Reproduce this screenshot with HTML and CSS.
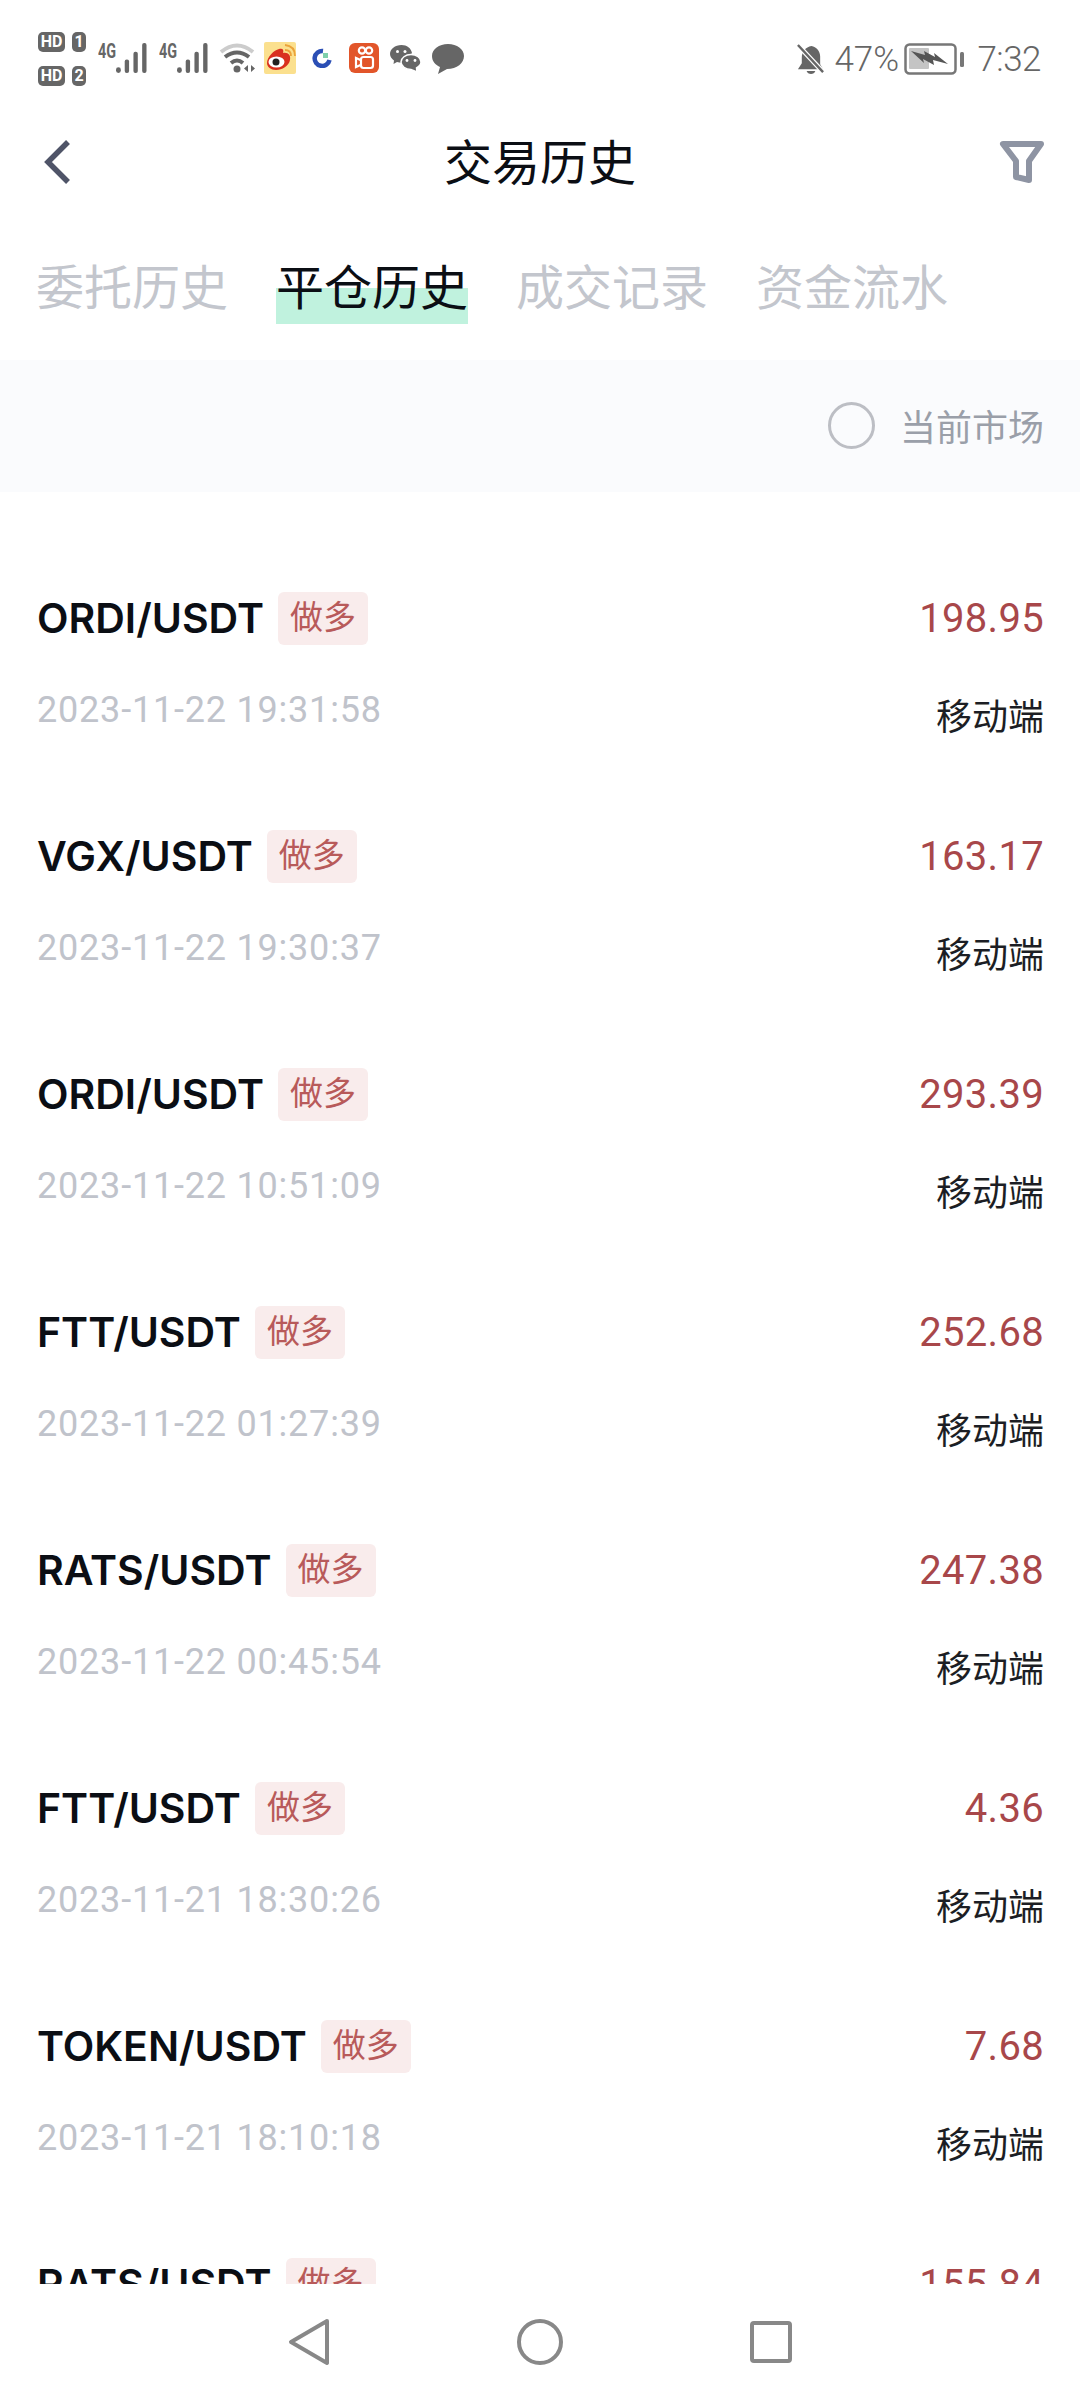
FILE: index.html
```html
<!DOCTYPE html>
<html lang="zh-CN">
<head>
<meta charset="UTF-8">
<meta name="viewport" content="width=device-width, initial-scale=1.0">
<title>交易历史</title>
<link rel="stylesheet" href="styles.css">
</head>
<body>

<div class="screen">

    <!-- Status bar -->
    <div class="status-bar">
        <div class="status-left">
            <div class="sim-grid">
                <span class="hd-badge">HD</span><span class="sim-badge">1</span>
                <span class="hd-badge">HD</span><span class="sim-badge">2</span>
            </div>
            <div class="signal">
                <span class="signal-label">4G</span>
                <svg class="signal-bars" viewBox="0 0 32 32"><g fill="#666"><rect x="0" y="25" width="5" height="6" rx="2.5"/><rect x="9" y="17" width="4.5" height="14" rx="2"/><rect x="18" y="9" width="4.5" height="22" rx="2"/><rect x="27" y="0" width="4.5" height="31" rx="2"/></g></svg>
            </div>
            <div class="signal signal-second">
                <span class="signal-label">4G</span>
                <svg class="signal-bars" viewBox="0 0 32 32"><g fill="#666"><rect x="0" y="25" width="5" height="6" rx="2.5"/><rect x="9" y="17" width="4.5" height="14" rx="2"/><rect x="18" y="9" width="4.5" height="22" rx="2"/><rect x="27" y="0" width="4.5" height="31" rx="2"/></g></svg>
            </div>
            <svg class="icon-wifi" viewBox="0 0 37 30">
                <path d="M2 9 Q18 -4 34 9" fill="none" stroke="#ccc" stroke-width="4"/>
                <path d="M6 14 Q18 5 30 14" fill="none" stroke="#666" stroke-width="4"/>
                <path d="M12 20 Q18 15 24 20" fill="none" stroke="#666" stroke-width="4"/>
                <circle cx="18" cy="26" r="3.5" fill="#666"/>
                <path d="M29 22 v7 l-4 -3.5z M32 22 v7 l4 -3.5z" fill="#666"/>
            </svg>
            <svg class="icon-weibo" viewBox="0 0 32 32">
                <rect width="32" height="32" rx="2" fill="#fbe08e"/>
                <path d="M3 21 C3 15 10 8 15 7 C19 6 20 8 19 11 C24 10 27 13 26 18 C25 24 18 28 12 28 C7 28 3 25 3 21z" fill="#d9301f"/>
                <ellipse cx="12.500" cy="20" rx="8" ry="5.500" fill="#fff"/>
                <circle cx="12" cy="20" r="3.500" fill="#222"/>
                <path d="M21 8 Q27 8 27 14 M21 3 Q31 4 31 14" fill="none" stroke="#eba33a" stroke-width="1.800"/>
            </svg>
            <svg class="icon-circle" viewBox="0 0 20 20">
                <path d="M11 3 A7.500 7.500 0 1 0 17.500 12" fill="none" stroke="#2b4fb5" stroke-width="4.500"/>
                <rect x="11" y="5" width="5" height="5" fill="#7fd0ab"/>
            </svg>
            <svg class="icon-kuaishou" viewBox="0 0 30 30">
                <rect width="30" height="30" rx="6" fill="#e2552a"/>
                <g fill="none" stroke="#fff" stroke-width="2.200">
                    <circle cx="13" cy="7.500" r="3.200"/>
                    <circle cx="20" cy="7.500" r="3.200"/>
                    <rect x="12" y="14" width="12" height="11" rx="2.500"/>
                    <path d="M11.500 17 L7 15 V24 L11.500 22"/>
                </g>
            </svg>
            <svg class="icon-wechat" viewBox="0 0 31 27">
                <path d="M11.500 0 C5 0 0 4 0 9 C0 12 2 14 4 15.500 L3.500 19 L7 17 C10 18 14 17.500 14 17.500 L22 8 C21 3 17 0 11.500 0z" fill="#666"/>
                <path d="M21 9.500 C15.500 9.500 11 13 11 17 C11 21 15.500 24.500 21 24.500 L27 27 L26.500 23 C29 21.500 31 19.500 31 17 C31 13 26.500 9.500 21 9.500z" fill="#666" stroke="#fff" stroke-width="1.500"/>
                <g fill="#fff"><circle cx="7.500" cy="6.500" r="1.500"/><circle cx="15" cy="6.500" r="1.500"/><circle cx="17" cy="15.500" r="1.400"/><circle cx="25" cy="15.500" r="1.400"/></g>
            </svg>
            <svg class="icon-message" viewBox="0 0 32 30">
                <path d="M16 0 C7 0 0 5 0 12 C0 18 4 21 8 23 L6 30 L15 25 C25 25 32 19 32 12 C32 5 25 0 16 0z" fill="#666"/>
            </svg>
        </div>
        <div class="status-right">
            <svg class="icon-bell" viewBox="0 0 30 32">
                <path d="M16 2 C10 3 6 8 6 14 V20 L2 26 H28 L25 21 V13 C25 7 21 3 16 2z" fill="#666"/>
                <path d="M11 28 H20 C19 32 12 32 11 28z" fill="#666"/>
                <path d="M1 0 L29 30" stroke="#fff" stroke-width="5"/>
                <path d="M2 1 L28 29" stroke="#666" stroke-width="2.500"/>
            </svg>
            <span class="battery-text">47%</span>
            <svg class="icon-battery" viewBox="0 0 60 32">
                <rect x="1.500" y="1.500" width="50" height="29" rx="4" fill="#fff" stroke="#777" stroke-width="2.500"/>
                <rect x="5" y="5" width="20" height="21" rx="1" fill="#c4c4c4"/>
                <path d="M7 8 L21 12 L20 8 L31 14 L30 10 L44 21 L29 17 L30 22 L19 16 L20 20z" fill="#555"/>
                <rect x="56" y="9" width="4" height="15" rx="1.500" fill="#777"/>
            </svg>
            <span class="clock">7:32</span>
        </div>
    </div>

    <!-- Title bar -->
    <div class="title-bar">
        <svg class="icon-back" viewBox="0 0 28 46"><path d="M25 3 L5 23 L25 43" fill="none" stroke="#4f5468" stroke-width="5.500"/></svg>
        <h1 class="page-title">交易历史</h1>
        <svg class="icon-filter" viewBox="0 0 46 44"><path d="M4 4 H42 L30 21 V40 L17 37 V21z" fill="none" stroke="#8e94a3" stroke-width="6" stroke-linejoin="round"/></svg>
    </div>

    <!-- Tabs -->
    <div class="tabs">
        <span class="tab">委托历史</span>
        <span class="tab tab-active">平仓历史</span>
        <span class="tab">成交记录</span>
        <span class="tab">资金流水</span>
    </div>

    <!-- Market filter -->
    <div class="market-filter">
        <span class="radio"></span>
        <span class="market-label">当前市场</span>
    </div>

    <!-- Orders -->
    <div class="order-list">
        <div class="order">
            <div class="order-top">
                <span class="pair">ORDI/USDT</span><span class="side-tag">做多</span>
                <span class="amount">198.95</span>
            </div>
            <div class="order-bottom">
                <span class="order-time">2023-11-22 19:31:58</span>
                <span class="order-source">移动端</span>
            </div>
        </div>
        <div class="order">
            <div class="order-top">
                <span class="pair">VGX/USDT</span><span class="side-tag">做多</span>
                <span class="amount">163.17</span>
            </div>
            <div class="order-bottom">
                <span class="order-time">2023-11-22 19:30:37</span>
                <span class="order-source">移动端</span>
            </div>
        </div>
        <div class="order">
            <div class="order-top">
                <span class="pair">ORDI/USDT</span><span class="side-tag">做多</span>
                <span class="amount">293.39</span>
            </div>
            <div class="order-bottom">
                <span class="order-time">2023-11-22 10:51:09</span>
                <span class="order-source">移动端</span>
            </div>
        </div>
        <div class="order">
            <div class="order-top">
                <span class="pair">FTT/USDT</span><span class="side-tag">做多</span>
                <span class="amount">252.68</span>
            </div>
            <div class="order-bottom">
                <span class="order-time">2023-11-22 01:27:39</span>
                <span class="order-source">移动端</span>
            </div>
        </div>
        <div class="order">
            <div class="order-top">
                <span class="pair">RATS/USDT</span><span class="side-tag">做多</span>
                <span class="amount">247.38</span>
            </div>
            <div class="order-bottom">
                <span class="order-time">2023-11-22 00:45:54</span>
                <span class="order-source">移动端</span>
            </div>
        </div>
        <div class="order">
            <div class="order-top">
                <span class="pair">FTT/USDT</span><span class="side-tag">做多</span>
                <span class="amount">4.36</span>
            </div>
            <div class="order-bottom">
                <span class="order-time">2023-11-21 18:30:26</span>
                <span class="order-source">移动端</span>
            </div>
        </div>
        <div class="order">
            <div class="order-top">
                <span class="pair">TOKEN/USDT</span><span class="side-tag">做多</span>
                <span class="amount">7.68</span>
            </div>
            <div class="order-bottom">
                <span class="order-time">2023-11-21 18:10:18</span>
                <span class="order-source">移动端</span>
            </div>
        </div>
        <div class="order">
            <div class="order-top">
                <span class="pair">RATS/USDT</span><span class="side-tag">做多</span>
                <span class="amount">155.84</span>
            </div>
        </div>
    </div>

    <!-- Navigation bar -->
    <div class="nav-bar">
        <svg class="nav-icon" viewBox="0 0 46 48"><path d="M41 3 L5 24 L41 45z" fill="none" stroke="#888" stroke-width="4" stroke-linejoin="round"/></svg>
        <svg class="nav-icon" viewBox="0 0 46 48"><circle cx="23" cy="24" r="21" fill="none" stroke="#888" stroke-width="4"/></svg>
        <svg class="nav-icon" viewBox="0 0 46 48"><rect x="4" y="5" width="38" height="38" rx="2" fill="none" stroke="#888" stroke-width="4"/></svg>
    </div>

</div>

</body>
</html>
```

FILE: styles.css
```css
* {
    box-sizing: border-box;
}
body {
    margin: 0;
    background-color: #fff;
    font-family: Roboto, "Noto Sans CJK SC", sans-serif;
}
.screen {
    width: 1080px;
    height: 2400px;
    display: flex;
    flex-direction: column;
    overflow: hidden;
}

/* status bar */
.status-bar {
    height: 118px;
    padding: 32px 39px 0 38px;
    display: flex;
    justify-content: space-between;
    align-items: flex-start;
    color: #666;
}
.status-left {
    display: flex;
    align-items: flex-start;
}
.status-right {
    display: flex;
    align-items: center;
    height: 32px;
    margin-top: 11px;
}
.sim-grid {
    display: grid;
    grid-template-columns: 27px 14px;
    column-gap: 7px;
    row-gap: 14px;
}
.hd-badge, .sim-badge {
    height: 20px;
    background-color: #666;
    color: #fff;
    border-radius: 5px;
    font-size: 16px;
    line-height: 20px;
    font-weight: 700;
    text-align: center;
}
.signal {
    display: flex;
    align-items: flex-start;
    margin-top: 11px;
    margin-left: 12px;
    width: 50px;
}
.signal-second {
    margin-left: 11px;
}
.signal-label {
    width: 17px;
    font-size: 20px;
    line-height: 17px;
    font-weight: 700;
    color: #666;
    transform: scaleX(0.72);
    transform-origin: left;
}
.signal-bars {
    width: 33px;
    height: 31px;
}
.icon-wifi {
    width: 37px;
    height: 30px;
    margin: 11px 0 0 10px;
}
.icon-weibo {
    width: 32px;
    height: 32px;
    margin: 10px 0 0 8px;
}
.icon-circle {
    width: 20px;
    height: 20px;
    margin: 16px 0 0 16px;
}
.icon-kuaishou {
    width: 30px;
    height: 30px;
    margin: 11px 0 0 17px;
}
.icon-wechat {
    width: 31px;
    height: 27px;
    margin: 13px 0 0 11px;
}
.icon-message {
    width: 32px;
    height: 30px;
    margin: 12px 0 0 11px;
}
.icon-bell {
    width: 29px;
    height: 31px;
}
.battery-text {
    font-size: 35px;
    font-weight: 300;
    margin-left: 9px;
    width: 63px;
}
.icon-battery {
    width: 60px;
    height: 32px;
    margin-left: 7px;
}
.clock {
    font-size: 35px;
    font-weight: 300;
    margin-left: 13px;
    letter-spacing: -0.5px;
}

/* title bar */
.title-bar {
    height: 88px;
    padding: 0 35px 0 43px;
    display: flex;
    justify-content: space-between;
    align-items: center;
}
.icon-back {
    width: 28px;
    height: 46px;
}
.page-title {
    margin: 0 0 6px 10px;
    font-size: 48px;
    font-weight: 400;
    color: #0b0e14;
}
.icon-filter {
    width: 46px;
    height: 44px;
}

/* tabs */
.tabs {
    height: 154px;
    padding: 10px 35px 0 36px;
    display: flex;
    gap: 48px;
    align-items: center;
}
.tab {
    padding-top: 2px;
    font-size: 48px;
    line-height: 70px;
    color: #c3c6cd;
}
.tab-active {
    color: #0b0e14;
    background: linear-gradient(to bottom, transparent 0 36px, #c0f2de 36px);
}

/* market filter */
.market-filter {
    height: 132px;
    padding: 0 36px 2px;
    background-color: #fafbfd;
    display: flex;
    justify-content: flex-end;
    align-items: center;
}
.radio {
    width: 47px;
    height: 47px;
    border: 3px solid #bcbec4;
    border-radius: 50%;
}
.market-label {
    margin-left: 25px;
    font-size: 36px;
    color: #9a9fa9;
}

/* orders */
.order-list {
    flex: 1;
    overflow: hidden;
}
.order {
    height: 238px;
    padding: 98px 36px 0 37px;
}
.order-top {
    height: 56px;
    display: flex;
    align-items: center;
}
.pair {
    font-family: Inter, Roboto, sans-serif;
    font-size: 41px;
    font-weight: 600;
    color: #0b0e14;
}
.side-tag {
    margin-left: 14px;
    width: 90px;
    height: 53px;
    background-color: #f9ecec;
    border-radius: 6px;
    color: #b85a5a;
    font-size: 33px;
    line-height: 51px;
    text-align: center;
}
.amount {
    margin-left: auto;
    font-size: 40px;
    letter-spacing: 0.3px;
    color: #a8474a;
}
.order-bottom {
    margin-top: 34px;
    display: flex;
    justify-content: space-between;
    align-items: center;
}
.order-time {
    font-size: 36px;
    letter-spacing: 0.8px;
    color: #c0c3cb;
}
.order-source {
    margin-top: 8px;
    font-size: 36px;
    color: #1c1e24;
}

/* navigation bar */
.nav-bar {
    height: 116px;
    padding: 34px 0 0;
    display: flex;
    justify-content: center;
    gap: 185px;
    align-items: flex-start;
    background-color: #fff;
}
.nav-icon {
    width: 46px;
    height: 48px;
}
```
